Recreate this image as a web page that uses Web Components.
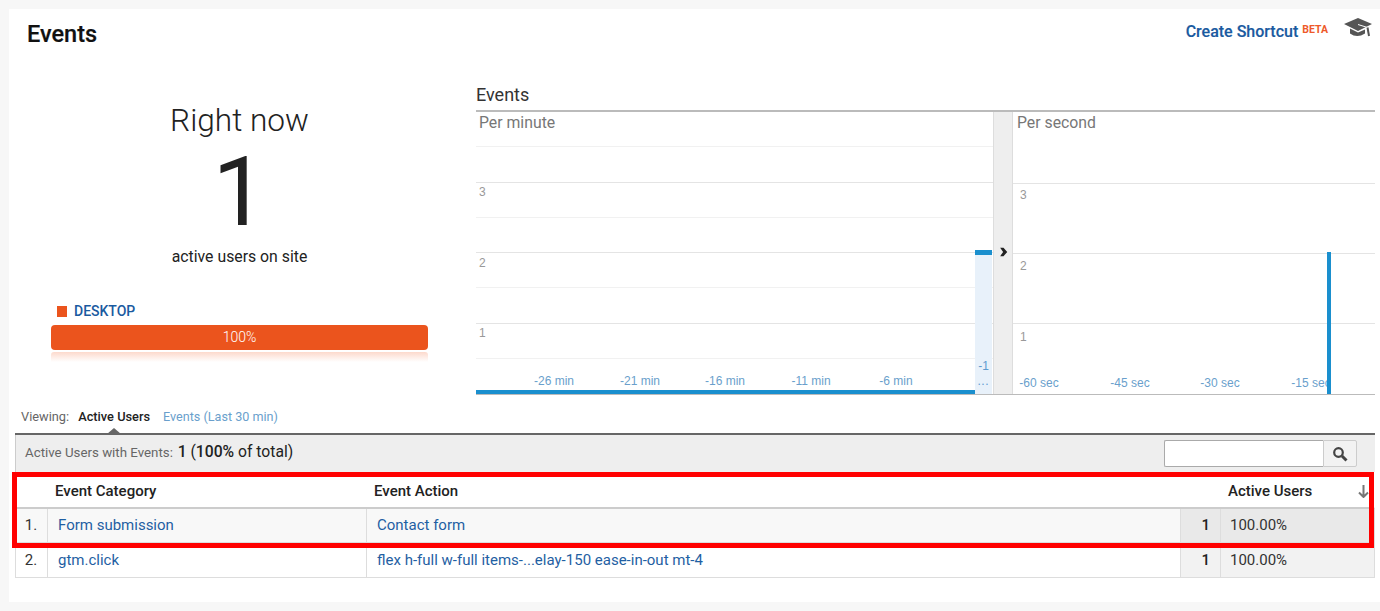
<!DOCTYPE html>
<html>
<head>
<meta charset="utf-8">
<title>Events</title>
<style>
    html, body { margin: 0; height: 611px; overflow: hidden; background: #f7f7f7; }
    body { font-family: Roboto, "Liberation Sans", sans-serif; color: #222; }
</style>
</head>
<body>
<ga-panel>
    <ga-header slot="header" title-text="Events"></ga-header>
    <ga-now slot="now"></ga-now>
    <ga-chart slot="chart"></ga-chart>
    <ga-tabs slot="tabs"></ga-tabs>
    <ga-table slot="table"></ga-table>
</ga-panel>

<script>
class Panel extends HTMLElement {
    constructor() {
        super();
        this.attachShadow({mode: 'open'});
        this.shadowRoot.innerHTML = `
            <style>
                :host {
                    display: block;
                    position: relative;
                    margin: 9px 0 0 9px;
                    height: 593px;
                    background: #fff;
                }
                #overview {
                    display: grid;
                    grid-template-columns: 467px 899px;
                    height: 311px;
                }
                /* the red marker lies over the table */
                #marker {
                    position: absolute;
                    left: 3px;
                    top: 463px;
                    width: 1352px;
                    height: 66px;
                    border: 5px solid #f00;
                    pointer-events: none;
                }
            </style>
            <slot name="header"></slot>
            <div id="overview">
                <slot name="now"></slot>
                <slot name="chart"></slot>
            </div>
            <slot name="tabs"></slot>
            <slot name="table"></slot>
            <div id="marker"></div>
        `;
    }
}

class Header extends HTMLElement {
    constructor() {
        super();
        this.attachShadow({mode: 'open'});
        this.shadowRoot.innerHTML = `
            <style>
                :host {
                    display: flex;
                    justify-content: space-between;
                    height: 75px;
                    padding: 8px 8px 0 18px;
                    box-sizing: border-box;
                }
                h1 { margin: 0; font-size: 23.5px; line-height: 34px; font-weight: 500; color: #111; -webkit-text-stroke: .2px #111; }
                #right { display: flex; align-items: flex-start; height: 30px; }
                a { font-size: 16px; font-weight: 500; line-height: 30px; color: #1a5aa0; -webkit-text-stroke: .15px #1a5aa0; }
                sup { font-size: 10.5px; font-weight: 700; color: #ee5a2a; line-height: 26px; margin-left: 4px; align-self: flex-start; }
                svg { margin: 1px 0 0 16px; }
            </style>
            <h1>${this.getAttribute('title-text')}</h1>
            <div id="right">
                <a>Create Shortcut</a><sup>BETA</sup>
                <svg width="28" height="20" viewBox="0 0 28 20">
                    <path d="M14 0 L28 6 L14 13 L0 6 Z" fill="#555"/>
                    <path d="M6 10.5 L14 14.5 L21 11.5 L21 15.5 Q13 20.5 6 15.5 Z" fill="#555"/>
                    <path d="M14 6.5 L23.5 9.5" stroke="#fff" stroke-width="1" fill="none"/>
                    <path d="M23.5 9.5 L25 18" stroke="#555" stroke-width="2" fill="none"/>
                </svg>
            </div>
        `;
    }
}

class Now extends HTMLElement {
    constructor() {
        super();
        this.attachShadow({mode: 'open'});
        this.shadowRoot.innerHTML = `
            <style>
                :host {
                    display: flex;
                    flex-direction: column;
                    padding: 17px 0 0 42px;
                    width: 377px;
                    text-align: center;
                    color: #222;
                }
                #label { font-size: 31.6px; font-weight: 300; line-height: 40px; }
                #count { font-size: 96px; font-weight: 400; line-height: 102px; }
                #sub { font-size: 15.8px; line-height: 20px; margin-top: 4px; }
                #legend {
                    display: flex;
                    align-items: center;
                    gap: 7px;
                    margin: 35px 0 0 6px;
                    font-size: 14px;
                    line-height: 18px;
                    font-weight: 500;
                    color: #1a5aa0;
                }
                #legend i { width: 10px; height: 11px; background: #eb541d; }
                #bar {
                    margin-top: 5px;
                    height: 25px;
                    line-height: 25px;
                    border-radius: 4px;
                    background: #eb541d;
                    color: #fff;
                    font-size: 14px;
                    font-weight: 300;
                }
                #shine {
                    margin-top: 2px;
                    height: 10px;
                    border-radius: 3px 3px 0 0;
                    background: linear-gradient(#fcd9cc, #fff);
                }
            </style>
            <div id="label">Right now</div>
            <div id="count">1</div>
            <div id="sub">active users on site</div>
            <div id="legend"><i></i>DESKTOP</div>
            <div id="bar">100%</div>
            <div id="shine"></div>
        `;
    }
}

class Pane extends HTMLElement {
    constructor() {
        super();
        this.attachShadow({mode: 'open'});
        // every grid line, y label and x label has its place on the plot given by data
        const lines = JSON.parse(this.getAttribute('lines'));
        const ys = JSON.parse(this.getAttribute('ys'));
        const xs = JSON.parse(this.getAttribute('xs'));
        this.shadowRoot.innerHTML = `
            <style>
                :host {
                    display: block;
                    position: relative;
                    overflow: hidden;
                    flex: var(--w) 0 0;
                }
                #name { padding: 2px 0 0 var(--pad); font-size: 15.8px; line-height: 18px; color: #777; font-weight: 400; }
                .line { position: absolute; left: 0; right: 0; height: 1px; background: #e4e4e4; }
                .line.faint { background: #f1f1f1; }
                .y, .x { position: absolute; font-family: "Liberation Sans", sans-serif; white-space: nowrap; }
                .y { font-size: 12px; line-height: 14px; color: #999; }
                .x { font-size: 12px; line-height: 14px; color: #6a9fcc; width: 60px; margin-left: -30px; text-align: center; top: var(--xt); }
            </style>
            <div id="name">${this.getAttribute('name')}</div>
            ${lines.map(l => `<div class="line ${l[1] ? 'faint' : ''}" style="top:${l[0]}px"></div>`).join('')}
            ${ys.map(y => `<span class="y" style="left:${y[0]}px;top:${y[1]}px">${y[2]}</span>`).join('')}
            ${xs.map(x => `<span class="x" style="left:${x[0]}px">${x[1]}</span>`).join('')}
            <slot></slot>
        `;
    }
}

class Chart extends HTMLElement {
    constructor() {
        super();
        this.attachShadow({mode: 'open'});
        this.shadowRoot.innerHTML = `
            <style>
                :host { display: block; }
                h2 { margin: 0; height: 26px; font-size: 18px; line-height: 22px; font-weight: 400; color: #333; }
                #plot {
                    display: flex;
                    height: 282px;
                    border-top: 2px solid #bbb;
                    border-bottom: 1px solid #bbb;
                }
                #split {
                    flex: 20px 0 0;
                    box-sizing: border-box;
                    display: flex;
                    justify-content: center;
                    align-items: flex-start;
                    padding-top: 135px;
                    background: #eee;
                    border-left: 1px solid #ddd;
                    border-right: 1px solid #ddd;
                }
            </style>
            <h2>Events</h2>
            <div id="plot">
                <ga-pane style="--w:517px;--pad:3px;--xt:262px" name="Per minute"
                    lines='[[34,1],[70,0],[105,1],[140,0],[175,1],[211,0],[246,1]]'
                    ys='[[3,73,"3"],[3,144,"2"],[3,214,"1"]]'
                    xs='[[78,"-26 min"],[164,"-21 min"],[249,"-16 min"],[335,"-11 min"],[420,"-6 min"]]'>
                    <ga-hover></ga-hover>
                </ga-pane>
                <div id="split">
                    <svg width="9" height="10" viewBox="0 0 10 12"><path d="M1 1 L5 1 L9.5 6 L5 11 L1 11 L4.5 6 Z" fill="#222"/></svg>
                </div>
                <ga-pane style="--w:362px;--pad:4px;--xt:264px" name="Per second"
                    lines='[[71,0],[141,0],[211,0]]'
                    ys='[[7,76,"3"],[7,147,"2"],[7,218,"1"]]'
                    xs='[[26,"-60 sec"],[117,"-45 sec"],[207,"-30 sec"],[298,"-15 sec"]]'>
                    <ga-spike></ga-spike>
                </ga-pane>
            </div>
        `;
    }
}

class Hover extends HTMLElement {
    constructor() {
        super();
        this.attachShadow({mode: 'open'});
        this.shadowRoot.innerHTML = `
            <style>
                :host { position: absolute; inset: 0; display: block; }
                #base { position: absolute; left: 0; width: 499px; bottom: 0; height: 4px; background: #1a8fce; }
                #col {
                    position: absolute;
                    left: 499px;
                    width: 17px;
                    top: 138px;
                    bottom: 0;
                    background: #e8f1fa;
                    border-top: 5px solid #1a8fce;
                    box-sizing: border-box;
                    color: #5d9bd0;
                    font: 12px/14px "Liberation Sans", sans-serif;
                }
                #col span { position: absolute; right: 3px; white-space: nowrap; }
            </style>
            <div id="base"></div>
            <div id="col"><span style="top:104px">-1</span><span style="top:119px;letter-spacing:.5px">...</span></div>
        `;
    }
}

class Spike extends HTMLElement {
    constructor() {
        super();
        this.attachShadow({mode: 'open'});
        this.shadowRoot.innerHTML = `
            <style>
                :host { position: absolute; left: 314px; width: 4px; top: 140px; bottom: 0; background: #1a8fce; display: block; }
            </style>
        `;
    }
}

class Tabs extends HTMLElement {
    constructor() {
        super();
        this.attachShadow({mode: 'open'});
        this.shadowRoot.innerHTML = `
            <style>
                :host {
                    display: flex;
                    align-items: center;
                    gap: 9px;
                    height: 38px;
                    padding: 4px 0 0 12px;
                    box-sizing: border-box;
                    font-size: 12.8px;
                }
                #view { color: #666; }
                #on { position: relative; font-weight: 500; color: #222; margin-right: 4px; }
                #on::after {
                    content: '';
                    position: absolute;
                    left: 29px;
                    top: 19px;
                    border: 7px solid transparent;
                    border-top: 0;
                    border-bottom: 6px solid #666;
                }
                a { color: #6a9fcc; font-size: 12.6px; }
            </style>
            <span id="view">Viewing:</span>
            <span id="on">Active Users</span>
            <a>Events (Last 30 min)</a>
        `;
    }
}

class DataTable extends HTMLElement {
    constructor() {
        super();
        this.attachShadow({mode: 'open'});
        const row = (n, cat, act, cls) => `
            <div class="row ${cls}">
                <span class="n">${n}.</span>
                <a>${cat}</a>
                <a>${act}</a>
                <b class="val">1</b>
                <span class="pct">100.00%</span>
            </div>`;
        this.shadowRoot.innerHTML = `
            <style>
                :host {
                    display: block;
                    margin-left: 6px;
                    width: 1360px;
                    border-top: 2px solid #666;
                    font-size: 15px;
                    color: #333;
                }
                #summary {
                    display: flex;
                    align-items: center;
                    justify-content: space-between;
                    height: 37px;
                    padding: 0 18px 0 9px;
                    background: #eee;
                    border-left: 1px solid #ccc;
                }
                #count { padding-bottom: 5px; }
                #summary small { font-size: 13.3px; color: #666; margin-right: 1px; }
                #summary span { font-size: 15.7px; color: #222; }
                #search { display: flex; height: 27px; }
                #search input {
                    width: 159px;
                    height: 27px;
                    box-sizing: border-box;
                    border: 1px solid #aaa;
                    border-right: 0;
                    border-radius: 2px 0 0 2px;
                    background: #fff;
                    padding: 0;
                }
                #search button {
                    width: 34px;
                    height: 27px;
                    padding: 0;
                    display: flex;
                    align-items: center;
                    justify-content: center;
                    border: 1px solid #ccc;
                    border-radius: 0 2px 2px 0;
                    background: #f2f2f2;
                }
                .head, .row {
                    display: grid;
                    grid-template-columns: 32px 319px 814px 40px 1fr;
                    align-items: center;
                    box-sizing: border-box;
                    border-left: 1px solid #ddd;
                    border-right: 1px solid #ddd;
                }
                .head {
                    height: 37px;
                    padding-top: 3px;
                    border-left-color: transparent;
                    border-right-color: transparent;
                    border-bottom: 2px solid #ccc;
                    font-weight: 500;
                    color: #222;
                }
                .head span { padding-left: 7px; }
                .head .sort {
                    grid-column: 5;
                    display: flex;
                    align-items: center;
                    justify-content: space-between;
                    padding-right: 5px;
                }
                .row { height: 35px; border-bottom: 1px solid #ddd; }
                .row > * { display: flex; align-items: center; height: 100%; box-sizing: border-box; padding-bottom: 1px; border-right: 1px solid #ddd; }
                .row a { color: #1f5fa3; padding-left: 10px; white-space: nowrap; }
                .row .n { justify-content: center; padding-right: 1px; }
                .row .val { justify-content: flex-end; padding-right: 10px; background: #f2f2f2; font-weight: 500; color: #222; }
                .row .pct { padding-left: 9px; background: #f2f2f2; border-right: 0; }
                .row.first { height: 34px; background: #f8f8f8; }
                .row.first .val, .row.first .pct { background: #e9e9e9; }
            </style>
            <div id="summary">
                <div id="count"><small>Active Users with Events:</small> <span><b style="font-weight:500">1</b> (<b style="font-weight:500">100%</b> of total)</span></div>
                <div id="search">
                    <input type="text">
                    <button>
                        <svg width="16" height="16" viewBox="0 0 16 16">
                            <circle cx="6.5" cy="6.5" r="4.3" fill="none" stroke="#444" stroke-width="2.2"/>
                            <path d="M10 10 L14.5 14.5" stroke="#444" stroke-width="3"/>
                        </svg>
                    </button>
                </div>
            </div>
            <div class="head">
                <span></span>
                <span>Event Category</span>
                <span>Event Action</span>
                <span class="sort">Active Users
                    <svg width="11" height="13" viewBox="0 0 11 13"><path d="M5.5 0 V12 M1 7.5 L5.5 12 L10 7.5" fill="none" stroke="#777" stroke-width="2"/></svg>
                </span>
            </div>
            ${row(1, 'Form submission', 'Contact form', 'first')}
            ${row(2, 'gtm.click', 'flex h-full w-full items-...elay-150 ease-in-out mt-4', '')}
        `;
    }
}

customElements.define('ga-panel', Panel);
customElements.define('ga-header', Header);
customElements.define('ga-now', Now);
customElements.define('ga-hover', Hover);
customElements.define('ga-spike', Spike);
customElements.define('ga-pane', Pane);
customElements.define('ga-chart', Chart);
customElements.define('ga-tabs', Tabs);
customElements.define('ga-table', DataTable);
</script>
</body>
</html>
